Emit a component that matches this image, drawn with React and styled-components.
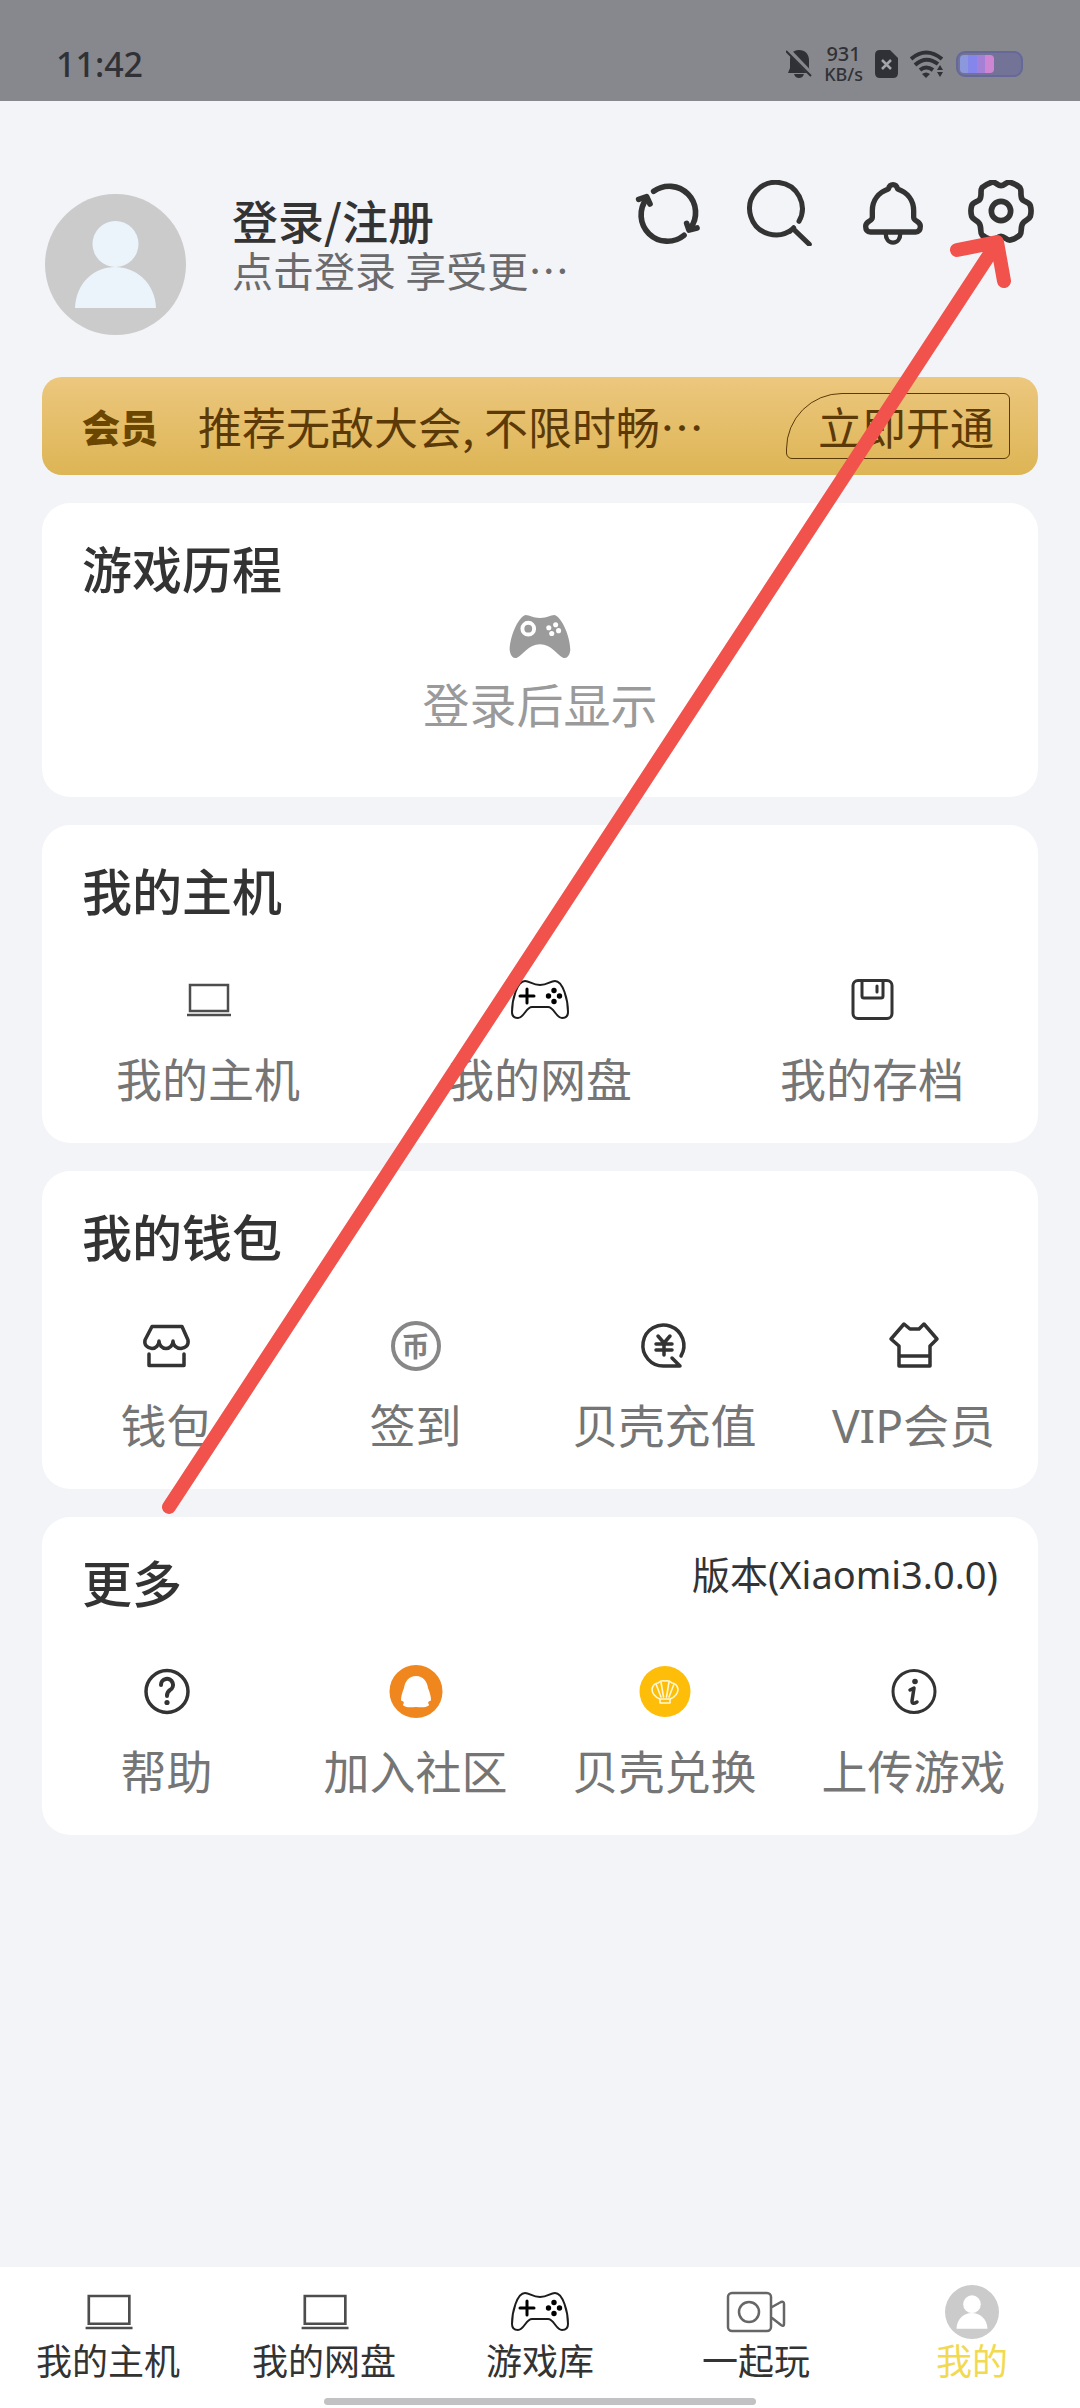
import React from "react";
import styled, { createGlobalStyle } from "styled-components";

const GlobalStyle = createGlobalStyle`
  * {
    box-sizing: border-box;
  }

  body {
    margin: 0;
    background-color: #f3f4f8;
    font-family: "Noto Sans", "Noto Sans CJK SC", sans-serif;
  }
`;

const LaptopIcon = ({ size = 60 }) => (
  <Icon $size={size} viewBox="0 0 60 60" stroke="#4d4d4d" strokeWidth="2.5">
    <path d="M12 15h38v26H12z" strokeLinejoin="miter" />
    <path d="M9 45h44" strokeLinecap="butt" />
  </Icon>
);

const GamepadIcon = () => (
  <Icon viewBox="0 0 60 60" stroke="#1c1c1c" strokeWidth="2">
    <path d="M15 11C20 11 22 15 30 15S40 11 45 11C53 11 58 30 58 42C58 47 55 48 52 48C46 48 44 37 38 37H22C16 37 14 48 8 48C5 48 2 47 2 42C2 30 7 11 15 11Z" />
    <path d="M10 26h14M17 19v14" stroke="#000" strokeWidth="3" />
    <g fill="#000" stroke="none">
      <circle cx="44" cy="20.5" r="2.7" />
      <circle cx="44" cy="31.5" r="2.7" />
      <circle cx="38.5" cy="26" r="2.7" />
      <circle cx="49.5" cy="26" r="2.7" />
    </g>
  </Icon>
);

const SolidGamepadIcon = () => (
  <SolidPad viewBox="0 0 62 45">
    <path
      d="M16 0C21 0 23 3 31 3S41 0 46 0C54 3 62 23 62 36C61 42 59 44 55 44C48 41 43 30 31 30S14 41 7 44C3 44 1 42 0 36C0 23 8 3 16 0Z"
      fill="#9b9b9b"
    />
    <circle cx="19" cy="14" r="6" fill="#9b9b9b" stroke="#fff" strokeWidth="4" />
    <g fill="#fff">
      <circle cx="40" cy="13" r="2.6" />
      <circle cx="47" cy="10" r="2.6" />
      <circle cx="50" cy="16" r="2.6" />
      <circle cx="43" cy="19" r="2.6" />
    </g>
  </SolidPad>
);

const SaveIcon = () => (
  <Icon viewBox="0 0 60 60">
    <rect x="11" y="10.5" width="39" height="38" rx="5" />
    <path d="M20 11v15q0 2 2 2h17q2 0 2-2V11M35 16v6" />
  </Icon>
);

const StoreIcon = () => (
  <Icon viewBox="0 0 60 60" strokeWidth="3.5">
    <path d="M15 10.500H45L51 24C52 30 48 32 44 32.500C39 32.500 36 29 36 25C36 29 33 32.500 29 32.500S22 29 22 25C22 29 19 32.500 15 32.500C10 32 7 29 8 24Z" />
    <path d="M12 38v11.500h35V38" />
  </Icon>
);

const YenIcon = () => (
  <Icon viewBox="0 0 60 60" strokeWidth="3.5">
    <path d="M46 40A20.500 20.500 0 1 0 29 50H45L37 42" />
    <path d="M23 20l6 7 6-7M29 27v12M21 28h16M21 34h16" />
  </Icon>
);

const ShirtIcon = () => (
  <Icon viewBox="0 0 60 60" strokeWidth="3.5">
    <path d="M20 8L26 13H35L40 8L53 23L46 30V50H15V30L7 23ZM15 40H46" />
  </Icon>
);

const HelpIcon = () => (
  <Icon viewBox="0 0 60 60" strokeWidth="3.5">
    <circle cx="30" cy="29.5" r="21" />
    <path d="M24 23A6 6 0 1 1 33 28Q30 30 30 34" strokeWidth="4" />
    <circle cx="30" cy="40.500" r="2.6" fill="#333" stroke="none" />
  </Icon>
);

const PenguinIcon = () => (
  <Icon viewBox="0 0 60 60" stroke="none">
    <circle cx="30" cy="29.5" r="26.5" fill="#f0861e" />
    <path
      fill="#fff"
      d="M30 14C37 14 41 19 42 26C44 31 45 35 45 38Q44 40 43 39L42 41Q44 43 42 44C39 46 34 45 30 45S21 46 18 44Q16 43 18 41L17 39Q16 40 15 38C15 35 16 31 18 26C19 19 23 14 30 14Z"
    />
  </Icon>
);

const ShellIcon = () => (
  <Icon viewBox="0 0 60 60" stroke="#fff9d6" strokeWidth="1.6">
    <circle cx="30" cy="29.5" r="25.5" fill="#febd08" stroke="none" />
    <path d="M25 37C20 35 17 31 17 27C18 23 20 21 23 21Q26 18 30 19Q34 18 37 21C40 21 42 23 43 27C43 31 40 35 35 37V41H25ZM26 37h8" />
    <path d="M26 35L21 22M28.500 35L26 20M31.500 35L34 20M34 35L39 22" />
  </Icon>
);

const InfoIcon = () => (
  <Icon viewBox="0 0 60 60">
    <circle cx="30" cy="29.5" r="21" />
    <circle cx="31" cy="19.5" r="2.8" fill="#333" stroke="none" />
    <path d="M26 28L30 26L28 39Q28 43 33 40" strokeWidth="3.5" />
  </Icon>
);

const CoinIcon = () => <Coin>币</Coin>;

const VideoIcon = () => (
  <Icon viewBox="0 0 60 60" stroke="#666" strokeWidth="2.5">
    <rect x="2" y="11" width="43" height="38" rx="4" />
    <circle cx="23" cy="30" r="10" />
    <path d="M46 25L55 20Q58 19 58 22V42Q58 45 55 43L46 36" />
  </Icon>
);

const Person = ({ size, fill }) => (
  <Icon $size={size} viewBox="0 0 141 141" stroke="none">
    <circle cx="70.5" cy="70.5" r="70.5" fill="#cbcbcc" />
    <circle cx="70.5" cy="50" r="23" fill={fill} />
    <path d="M30 114C31 88 50 73 70 73S110 88 111 114Z" fill={fill} />
  </Icon>
);

const headerActions = [
  {
    label: "刷新",
    width: 17,
    drawing: (
      <>
        <path d="M56 34A79 79 0 0 1 166 145M147 166A79 79 0 0 1 35 56" />
        <path d="M155 130L162 150L186 144M11 58L35 50L45 72" />
      </>
    ),
  },
  {
    label: "搜索",
    width: 15,
    drawing: <path d="M159 124A79 79 0 1 0 141 146L190 193M132 154L143 143" />,
  },
  {
    label: "通知",
    width: 16,
    drawing: (
      <>
        <path d="M108 14C99 14 96 20 94 27C66 37 46 60 46 92V112C46 119 42 121 36 124C29 128 26 132 26 139C26 150 31 156 40 156H176C185 156 190 150 190 139C190 132 187 128 180 124C174 121 170 119 170 112V92C170 60 150 37 122 27C120 20 117 14 108 14Z" />
        <path d="M86 158C86 177 95 188 108 188S130 177 130 158" strokeWidth="13" />
      </>
    ),
  },
  {
    label: "设置",
    width: 17,
    drawing: (
      <>
        <path d="M99 17C111 17 114 4 127 7C139 11 148 16 156 23C163 32 154 50 164 60C173 67 184 66 187 77C190 88 190 98 187 109C183 119 172 120 165 129C156 140 163 157 156 165C148 172 139 177 127 180C115 182 111 169 99 169S83 182 71 180C59 177 50 172 42 165C35 157 42 140 33 129C26 120 15 119 11 109C8 98 8 88 11 77C14 66 25 67 34 60C44 50 35 32 42 23C50 16 59 11 71 7C84 4 87 17 99 17Z" />
        <circle cx="99" cy="93" r="29" />
      </>
    ),
  },
];

const sections = [
  {
    title: "我的主机",
    items: [
      { label: "我的主机", icon: LaptopIcon },
      { label: "我的网盘", icon: GamepadIcon },
      { label: "我的存档", icon: SaveIcon },
    ],
  },
  {
    title: "我的钱包",
    items: [
      { label: "钱包", icon: StoreIcon },
      { label: "签到", icon: CoinIcon },
      { label: "贝壳充值", icon: YenIcon },
      { label: "VIP会员", icon: ShirtIcon },
    ],
  },
  {
    title: "更多",
    note: "版本(Xiaomi3.0.0)",
    items: [
      { label: "帮助", icon: HelpIcon },
      { label: "加入社区", icon: PenguinIcon },
      { label: "贝壳兑换", icon: ShellIcon },
      { label: "上传游戏", icon: InfoIcon },
    ],
  },
];

const tabs = [
  { label: "我的主机", icon: <LaptopIcon size={64} /> },
  { label: "我的网盘", icon: <LaptopIcon size={64} /> },
  { label: "游戏库", icon: <GamepadIcon /> },
  { label: "一起玩", icon: <VideoIcon /> },
  { label: "我的", icon: <Person size={54} fill="#fff" /> },
];

const StatusIcons = () => (
  <StatusGroup>
    <svg width="26" height="30" viewBox="0 0 26 30">
      <path
        fill="#303136"
        d="M13 1C19 1 23 5 23 11V19L25 24H2L4 19V11C4 5 7 1 13 1ZM8 25H18C17 28 15 29 13 29S9 28 8 25Z"
      />
      <path d="M2 1L26 26" stroke="#87888d" strokeWidth="5" />
      <path d="M0 2L25 27" stroke="#303136" strokeWidth="2" />
    </svg>
    <Speed>
      <span>931</span>
      <small>KB/s</small>
    </Speed>
    <svg width="23" height="28" viewBox="0 0 23 28">
      <path
        fill="#303136"
        d="M5 0H15L23 8V23Q23 28 18 28H5Q0 28 0 23V5Q0 0 5 0Z"
      />
      <path d="M7 10L16 19M16 10L7 19" stroke="#a4a5aa" strokeWidth="2.5" />
    </svg>
    <svg width="34" height="28" viewBox="0 0 34 28" fill="none">
      <g stroke="#303136" strokeWidth="4">
        <path d="M1 9Q16 -4 32 9" />
        <path d="M5 15Q16 5 28 14" />
        <path d="M10 20Q16 15 23 20" />
      </g>
      <path
        fill="#303136"
        d="M12 24Q16 21 20 24L16 28ZM27 20L30 15L33 20ZM27 22L30 27L33 22Z"
      />
    </svg>
    <Battery>
      <BatteryLevel />
    </Battery>
  </StatusGroup>
);

const App = () => {
  const [activeTab, setActiveTab] = React.useState(4);

  return (
    <Page lang="zh-CN">
      <GlobalStyle />
      <StatusBar>
        <Time>11:42</Time>
        <StatusIcons />
      </StatusBar>

      <Main>
        <Header>
          <AvatarButton aria-label="头像">
            <Person size={141} fill="#ecf4fb" />
          </AvatarButton>
          <Login>
            <LoginTitle>登录/注册</LoginTitle>
            <LoginHint>点击登录 享受更…</LoginHint>
          </Login>
          <Actions>
            {headerActions.map((action) => (
              <ActionButton key={action.label} aria-label={action.label}>
                <Icon
                  $size={66}
                  viewBox="0 0 198 198"
                  strokeWidth={action.width}
                >
                  {action.drawing}
                </Icon>
              </ActionButton>
            ))}
          </Actions>
        </Header>

        <Cards>
          <Banner>
            <MemberMark>会员</MemberMark>
            <BannerText>推荐无敌大会, 不限时畅…</BannerText>
            <OpenButton>立即开通</OpenButton>
          </Banner>

          <Card>
            <CardHead>
              <CardTitle>游戏历程</CardTitle>
            </CardHead>
            <Empty>
              <SolidGamepadIcon />
              <EmptyText>登录后显示</EmptyText>
            </Empty>
          </Card>

          {sections.map((section) => (
            <Card key={section.title}>
              <CardHead>
                <CardTitle>{section.title}</CardTitle>
                {section.note && <Note>{section.note}</Note>}
              </CardHead>
              <Grid $columns={section.items.length}>
                {section.items.map(({ label, icon: ItemIcon }) => (
                  <GridItem key={label}>
                    <ItemIcon />
                    {label}
                  </GridItem>
                ))}
              </Grid>
            </Card>
          ))}
        </Cards>
      </Main>

      <BottomBar>
        <Tabs>
          {tabs.map((tab, index) => (
            <TabButton
              key={index}
              $active={index === activeTab}
              onClick={() => setActiveTab(index)}
            >
              <TabIcon>{tab.icon}</TabIcon>
              {tab.label}
            </TabButton>
          ))}
        </Tabs>
        <HomeIndicator />
      </BottomBar>

      {/* pointer to the settings button */}
      <Pointer viewBox="0 0 1080 1560">
        <path d="M169 1507L997 243M957 250L997 242L1004 281" />
      </Pointer>
    </Page>
  );
};

const Page = styled.div`
  position: relative;
  min-height: 100vh;
  display: flex;
  flex-direction: column;
`;

const Icon = styled.svg.attrs((props) => ({
  fill: "none",
  stroke: props.stroke || "#333",
  strokeWidth: props.strokeWidth || 3,
  strokeLinecap: "round",
  strokeLinejoin: "round",
}))`
  display: block;
  flex-shrink: 0;
  width: ${(props) => props.$size || 60}px;
  height: ${(props) => props.$size || 60}px;
`;

const SolidPad = styled.svg`
  width: 62px;
  height: 44px;
`;

const Button = styled.button`
  border: none;
  padding: 0;
  background: none;
  font: inherit;
  cursor: pointer;
`;

const StatusBar = styled.div`
  height: 101px;
  padding: 26px 57px 0 56px;
  display: flex;
  justify-content: space-between;
  align-items: center;
  background-color: #87888d;
  color: #303136;
`;

const Time = styled.div`
  font-size: 34px;
  line-height: 40px;
  font-weight: 500;
`;

const StatusGroup = styled.div`
  display: flex;
  align-items: center;
  gap: 12px;
`;

const Speed = styled.div`
  display: flex;
  flex-direction: column;
  align-items: center;
  font-size: 20px;
  font-weight: 500;
  line-height: 20px;

  small {
    font-size: 18px;
  }
`;

const Battery = styled.div`
  width: 67px;
  height: 26px;
  padding: 2px;
  border: 2px solid #66689a;
  border-radius: 9px;
  background-color: #727397;
`;

const BatteryLevel = styled.div`
  width: 34px;
  height: 100%;
  border-radius: 4px;
  background: linear-gradient(
    90deg,
    #8b98dc 25%,
    #8586ec 25% 50%,
    #a480d6 50% 75%,
    #cf86d2 75%
  );
`;

const Main = styled.main`
  flex: 1;
`;

const Header = styled.header`
  display: flex;
  align-items: flex-start;
  padding: 79px 46px 42px 45px;
`;

const AvatarButton = styled(Button)`
  margin-top: 14px;
`;

const Login = styled(Button)`
  flex: 1;
  margin: 14px 0 0 46px;
  display: flex;
  flex-direction: column;
  align-items: flex-start;
  font-family: "Noto Sans CJK SC", sans-serif;
  line-height: 50px;
  white-space: nowrap;
`;

const LoginTitle = styled.span`
  font-size: 46px;
  font-weight: 500;
  color: #333;
`;

const LoginHint = styled.span`
  font-size: 41px;
  color: #6b6b6d;
`;

const Actions = styled.div`
  display: flex;
  gap: 45px;
`;

const ActionButton = styled(Button)`
  width: 66px;
  height: 66px;
`;

const Cards = styled.div`
  display: flex;
  flex-direction: column;
  gap: 28px;
  padding: 0 42px 28px;
`;

const Banner = styled.section`
  height: 98px;
  padding: 0 28px 0 40px;
  display: flex;
  align-items: center;
  border-radius: 20px;
  background: linear-gradient(#ecc77e, #ddb555);
  color: #5c3a08;
  font-family: "Noto Sans CJK SC", sans-serif;
  font-size: 44px;
  line-height: 60px;
  white-space: nowrap;
`;

const MemberMark = styled.strong`
  margin-right: 40px;
  font-size: 38px;
  font-weight: 900;
  line-height: 64px;
  color: #6b4600;
`;

const BannerText = styled.span`
  flex: 1;
`;

const OpenButton = styled(Button)`
  width: 224px;
  height: 66px;
  padding: 0 17px 0 31px;
  border: 1px solid #5c3a08;
  border-radius: 56px 6px 6px 6px;
  color: inherit;
`;

const Card = styled.section`
  padding: 37px 0 32px;
  border-radius: 28px;
  background-color: #fff;
`;

const CardHead = styled.div`
  display: flex;
  justify-content: space-between;
  padding: 0 40px;
`;

const CardTitle = styled.h2`
  margin: 0;
  font-size: 50px;
  font-weight: 500;
  line-height: 60px;
  color: #333;
`;

const Note = styled.span`
  font-size: 38px;
  line-height: 40px;
  color: #333;
`;

const Empty = styled.div`
  display: flex;
  flex-direction: column;
  align-items: center;
  gap: 16px;
  padding: 15px 0 30px;
`;

const EmptyText = styled.p`
  margin: 0;
  font-size: 47px;
  line-height: 60px;
  color: #9a9a9a;
`;

const Grid = styled.div`
  display: grid;
  grid-template-columns: repeat(${(props) => props.$columns}, 1fr);
  padding: 48px 0 2px;
`;

const GridItem = styled(Button)`
  display: flex;
  flex-direction: column;
  align-items: center;
  gap: 19px;
  font-size: 46px;
  line-height: 60px;
  color: #757575;
`;

const Coin = styled.span`
  width: 50px;
  height: 50px;
  margin: 5px;
  display: flex;
  justify-content: center;
  align-items: center;
  border: 4px solid #878787;
  border-radius: 50%;
  font-size: 28px;
  font-weight: 700;
  line-height: 30px;
  color: #808080;
`;

const BottomBar = styled.nav`
  padding: 15px 0 3px;
  background-color: #fff;
`;

const Tabs = styled.div`
  display: grid;
  grid-template-columns: repeat(5, 1fr);
`;

const TabButton = styled(Button)`
  display: flex;
  flex-direction: column;
  align-items: center;
  font-size: 36px;
  line-height: 40px;
  color: ${(props) => (props.$active ? "#f2da50" : "#333")};
`;

const TabIcon = styled.span`
  height: 60px;
  display: flex;
  align-items: center;
`;

const HomeIndicator = styled.div`
  width: 40%;
  height: 7px;
  margin: 16px auto 0;
  border-radius: 4px;
  background-color: #c2c2c5;
`;

const Pointer = styled.svg`
  position: absolute;
  top: 0;
  left: 0;
  width: 100%;
  fill: none;
  stroke: #f1524b;
  stroke-width: 14px;
  stroke-linecap: round;
  stroke-linejoin: round;
  pointer-events: none;
`;

export default App;
